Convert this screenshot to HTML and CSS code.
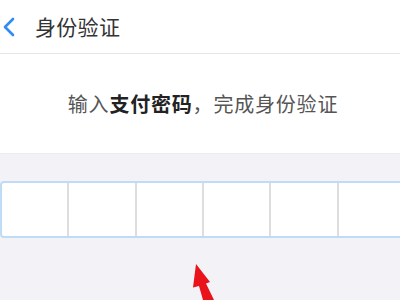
FILE: index.html
```html
<!DOCTYPE html>
<html lang="zh">
<head>
<meta charset="utf-8">
<link rel="stylesheet" href="styles.css">
</head>
<body>
<div class="page">
  <header class="topbar">
    <svg class="back" width="14" height="20" viewBox="0 0 14 20"><path d="M11 2 L3 10 L11 18" fill="none" stroke="#2f8cf2" stroke-width="2.6" stroke-linecap="round" stroke-linejoin="round"/></svg>
    <h1 class="title">身份验证</h1>
  </header>
  <section class="prompt">
    <p class="prompt-text">输入<b>支付密码</b>，完成身份验证</p>
  </section>
  <section class="entry">
    <div class="pinbox">
      <div class="cell"></div>
      <div class="cell"></div>
      <div class="cell"></div>
      <div class="cell"></div>
      <div class="cell"></div>
      <div class="cell"></div>
    </div>
    <svg class="arrow" width="50" height="45" viewBox="0 0 50 45"><path d="M16 9 L30 27 L26 28.5 L34 45 L23 45 L19 31 L13 32.5 Z" fill="#e8131b"/></svg>
  </section>
</div>
</body>
</html>
```
FILE: styles.css
```css
html, body {
  margin: 0;
  padding: 0;
  width: 400px;
  height: 300px;
  overflow: hidden;
  background: #f3f3f7;
  font-family: "Noto Sans CJK SC", "Noto Sans", sans-serif;
}
.page {
  width: 400px;
  height: 300px;
  display: flex;
  flex-direction: column;
}
.topbar {
  height: 54px;
  background: #fff;
  border-bottom: 1px solid #e6e6e6;
  display: flex;
  align-items: center;
  padding-left: 2px;
  gap: 19px;
  box-sizing: border-box;
}
.back {
  display: block;
}
.title {
  margin: 0;
  font-size: 21px;
  font-weight: 400;
  color: #333;
  letter-spacing: 0.3px;
  line-height: 1;
}
.prompt {
  height: 100px;
  background: #fff;
  border-bottom: 1px solid #ececf0;
  display: flex;
  align-items: center;
  justify-content: center;
  padding-left: 6px;
  box-sizing: border-box;
}
.prompt-text {
  margin: 0;
  font-size: 20px;
  color: #555;
  letter-spacing: 0.8px;
  line-height: 1;
}
.prompt-text b {
  color: #222;
  font-weight: 700;
}
.entry {
  position: relative;
  flex: 1;
  background: #f3f3f7;
  padding-top: 27px;
}
.pinbox {
  width: 406px;
  height: 57px;
  box-sizing: border-box;
  border: 2px solid #bfdcf6;
  border-radius: 4px;
  background: #fff;
  display: flex;
  margin-left: 0;
}
.cell {
  flex: 1;
  border-right: 2px solid #dddddd;
}
.cell:last-child {
  border-right: none;
}
.arrow {
  position: absolute;
  left: 180px;
  top: 101px;
}
```
